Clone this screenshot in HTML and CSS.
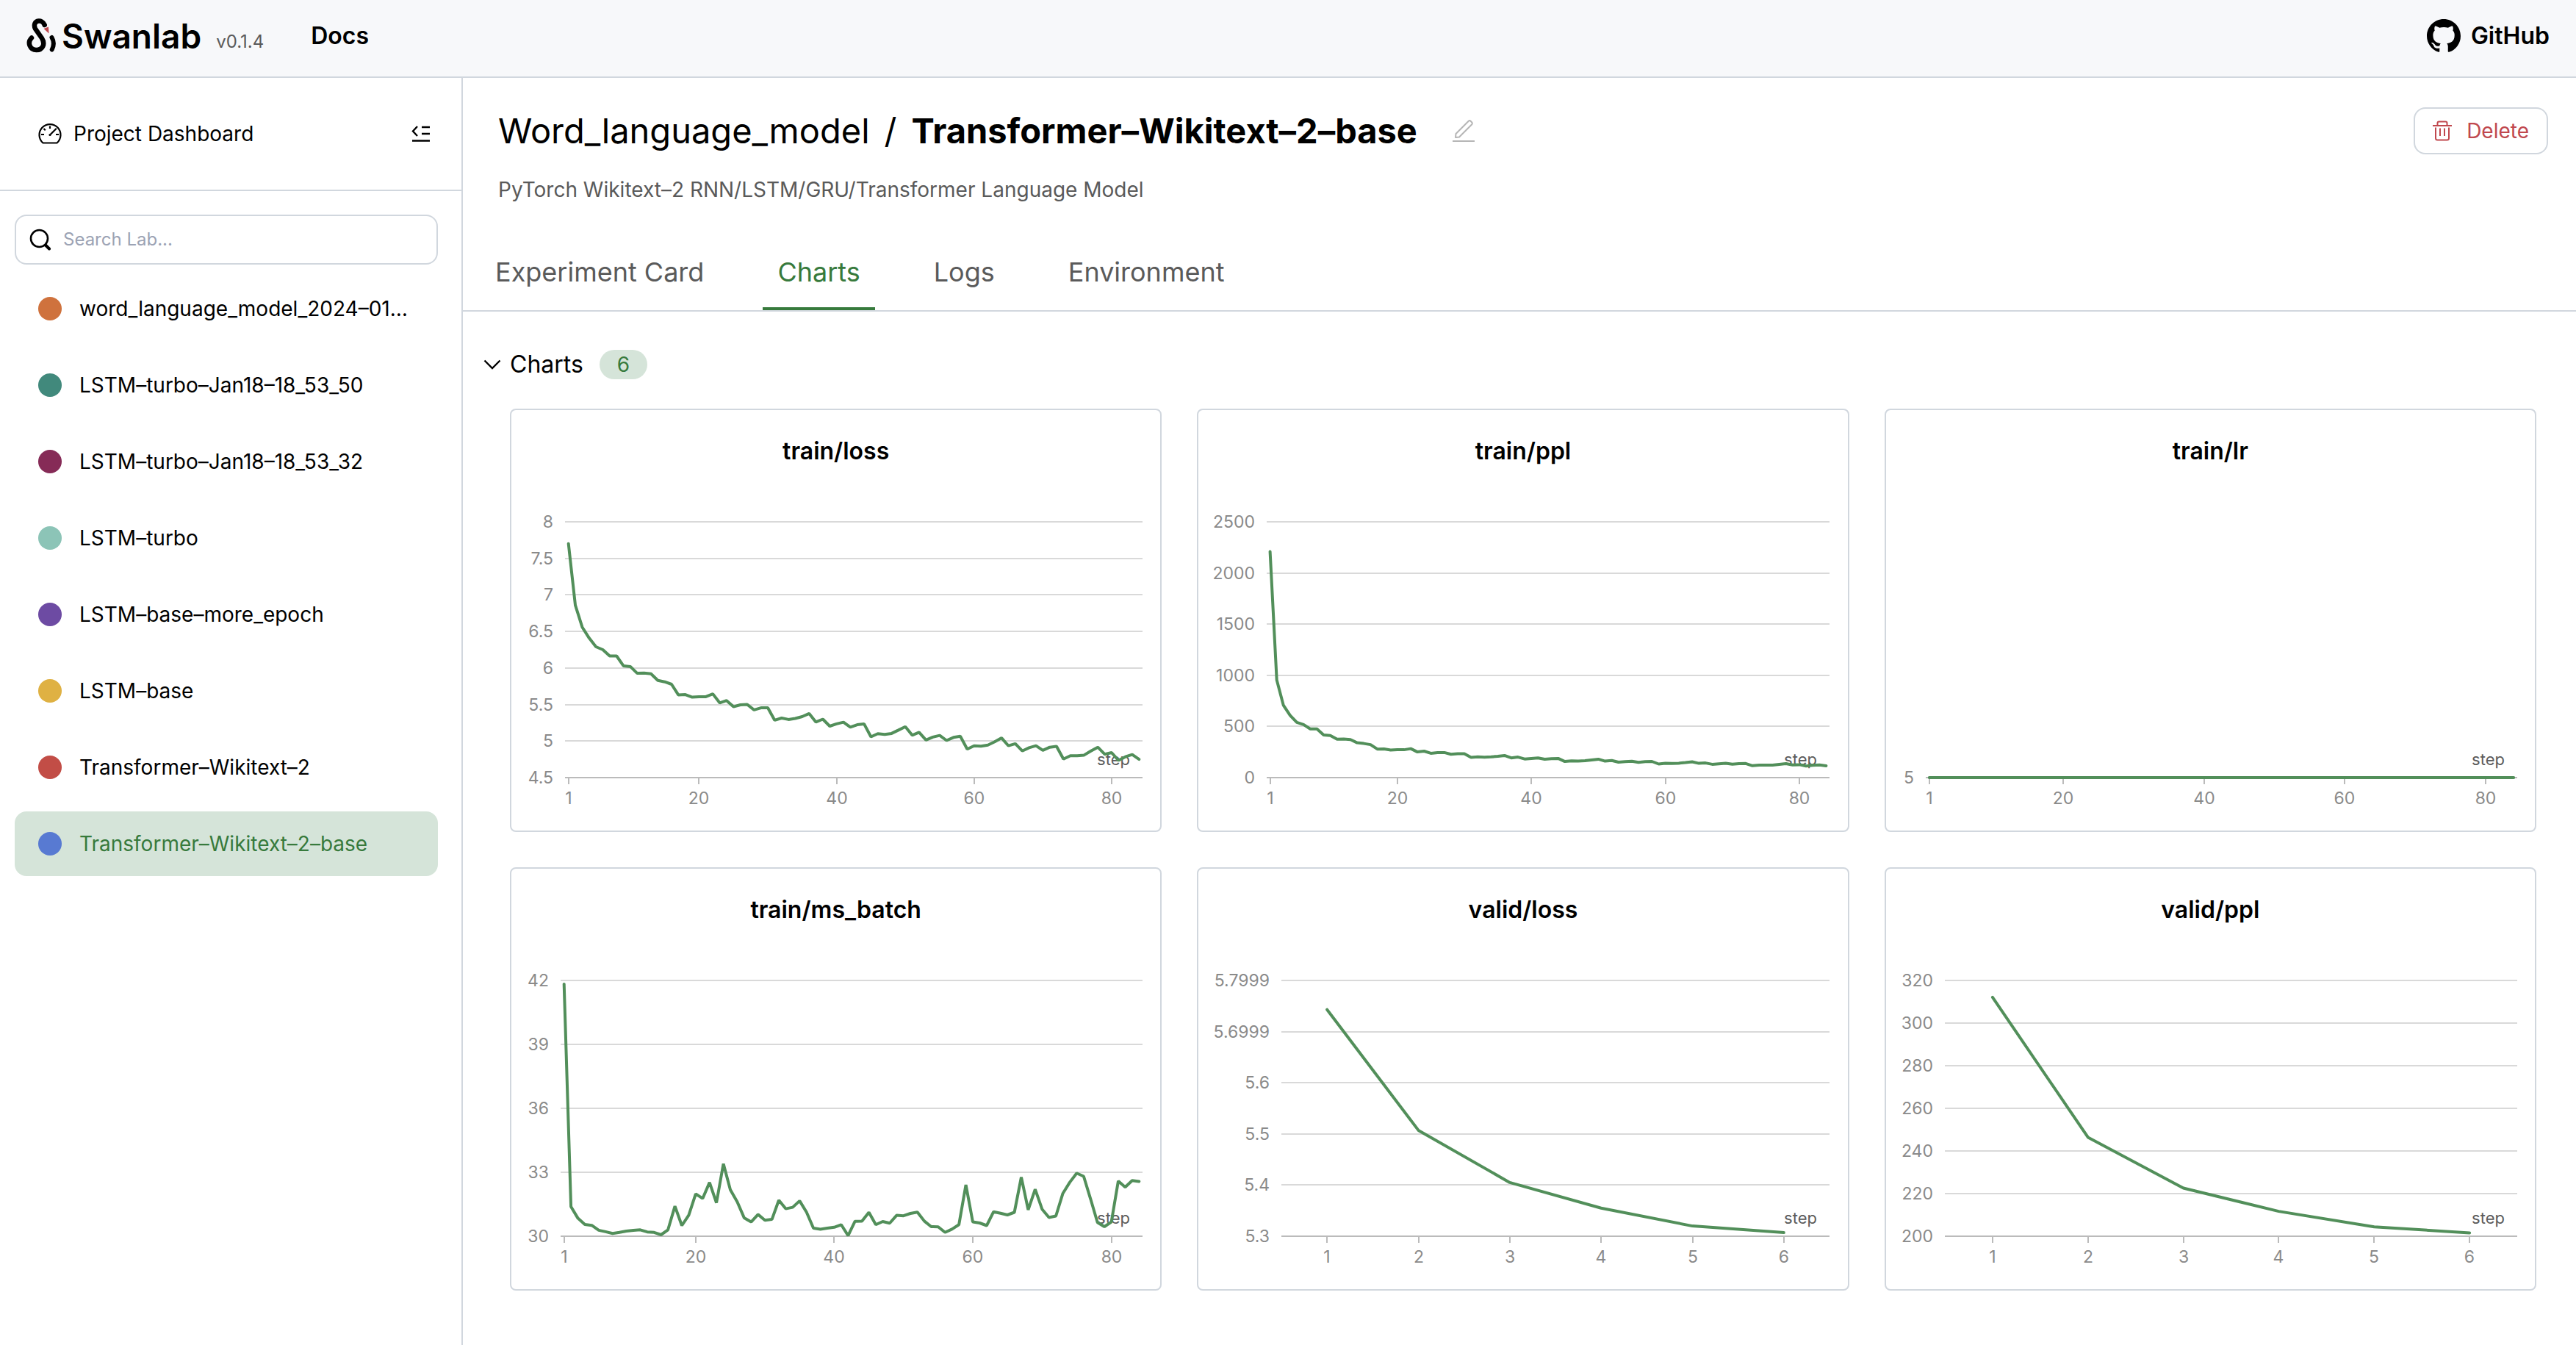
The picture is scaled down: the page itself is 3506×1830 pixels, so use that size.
FILE: index.html
```html
<!DOCTYPE html>
<html lang="en">
<head>
  <meta charset="utf-8">
  <title>Transformer-Wikitext-2-base - Swanlab</title>
  <meta name="viewport" content="width=device-width, initial-scale=1">
  <link rel="stylesheet" href="styles.css">
</head>
<body>
  <header class="topbar">
    <a class="brand" href="#">
      <svg class="brand-logo" viewBox="0 0 40 48" aria-hidden="true">
        <path d="M24.700 9C23 4.500 19 3.300 16.500 3.600C11.500 4.200 9.500 9 12 14L21 27C26 35 22 43 13.500 43C5 43 0.500 33 7 26.500" fill="none" stroke="#000" stroke-width="6.500" stroke-linecap="round"/>
        <path d="M34.500 26C37.500 31 37.500 37 34.700 42.500" fill="none" stroke="#000" stroke-width="6" stroke-linecap="round"/>
        <path d="M23.500 14L30 11.500L30.500 20.500Z" fill="#c0484e"/>
      </svg>
      <span class="brand-name">Swanlab</span>
    </a>
    <span class="version">v0.1.4</span>
    <a class="nav-link" href="#">Docs</a>
    <a class="nav-link github" href="#">
      <svg class="github-icon" viewBox="0 0 16 16" aria-hidden="true"><path d="M8 0C3.580 0 0 3.580 0 8c0 3.540 2.290 6.530 5.470 7.590.4.070.55-.17.55-.38 0-.19-.01-.82-.01-1.490-2.010.37-2.530-.49-2.690-.94-.09-.23-.48-.94-.82-1.130-.28-.15-.68-.52-.01-.53.63-.01 1.080.58 1.230.82.72 1.210 1.870.87 2.330.66.07-.52.28-.87.51-1.070-1.780-.2-3.640-.89-3.640-3.950 0-.87.31-1.590.82-2.150-.08-.2-.36-1.020.08-2.120 0 0 .67-.21 2.200.82.64-.18 1.320-.27 2-.27s1.360.09 2 .27c1.530-1.040 2.200-.82 2.200-.82.44 1.100.16 1.920.08 2.120.51.56.82 1.270.82 2.150 0 3.070-1.870 3.750-3.650 3.950.29.25.54.73.54 1.480 0 1.070-.01 1.930-.01 2.200 0 .21.15.46.55.38A8.010 8.010 0 0 0 16 8c0-4.420-3.580-8-8-8Z"/></svg>
      GitHub
    </a>
  </header>

  <div class="layout">
    <aside class="sidebar">
      <div class="dashboard-row">
        <a class="dashboard-link" href="#">
          <svg class="gauge-icon" viewBox="0 0 32 30" fill="none" stroke="#000" stroke-width="2.200" aria-hidden="true">
            <path d="M6.500 27.500A14.500 14.500 0 1 1 25.500 27.500Z" stroke-linejoin="round"/>
            <path d="M16 4.500v3.500M7.500 8l2.300 2.300M4 16h4M24 16h4M24.800 7.700l-8 8"/>
            <circle cx="16" cy="16.500" r="1.600" fill="#000" stroke="none"/>
          </svg>
          Project Dashboard
        </a>
        <button class="icon-button" type="button" aria-label="Collapse sidebar">
          <svg class="collapse-icon" viewBox="0 0 26 22" fill="none" stroke="#000" stroke-width="2.400" aria-hidden="true"><path d="M8 1L2 7.500L8 14M14 2h11M14 11h11M1 20.500h24"/></svg>
        </button>
      </div>
      <label class="search">
        <svg class="search-icon" viewBox="0 0 30 30" fill="none" stroke="#000" aria-hidden="true"><circle cx="13.500" cy="13.500" r="11.500" stroke-width="2.600"/><path d="M22 22.500L27 27.500" stroke-width="4" stroke-linecap="round"/></svg>
        <input class="search-input" type="search" placeholder="Search Lab..." aria-label="Search Lab">
      </label>
      <nav class="experiments" aria-label="Experiments">
        <a class="experiment" href="#"><span class="dot dot-orange"></span><span class="experiment-name">word_language_model_2024–01…</span></a>
        <a class="experiment" href="#"><span class="dot dot-green"></span><span class="experiment-name">LSTM–turbo–Jan18–18_53_50</span></a>
        <a class="experiment" href="#"><span class="dot dot-plum"></span><span class="experiment-name">LSTM–turbo–Jan18–18_53_32</span></a>
        <a class="experiment" href="#"><span class="dot dot-mint"></span><span class="experiment-name">LSTM–turbo</span></a>
        <a class="experiment" href="#"><span class="dot dot-violet"></span><span class="experiment-name">LSTM–base–more_epoch</span></a>
        <a class="experiment" href="#"><span class="dot dot-yellow"></span><span class="experiment-name">LSTM–base</span></a>
        <a class="experiment" href="#"><span class="dot dot-red"></span><span class="experiment-name">Transformer–Wikitext–2</span></a>
        <a class="experiment is-active" href="#" aria-current="page"><span class="dot dot-blue"></span><span class="experiment-name">Transformer–Wikitext–2–base</span></a>
      </nav>
    </aside>

    <main class="content">
      <div class="heading">
        <h1 class="title"><span>Word_language_model</span><span>/</span><strong class="title-run">Transformer–Wikitext–2–base</strong></h1>
        <button class="icon-button edit-button" type="button" aria-label="Edit experiment">
          <svg class="edit-icon" viewBox="0 0 30 32" fill="none" stroke="#b5b5b5" stroke-width="2" aria-hidden="true"><path d="M0 30h30"/><path d="M4 25L4.500 20L22 2.500Q23.200 1.500 24.300 2.500L26.500 4.800Q27.300 6 26.500 7L9 24.500Z" stroke-linejoin="round"/></svg>
        </button>
        <button class="delete-button" type="button">
          <svg class="trash-icon" viewBox="0 0 26 28" fill="none" stroke="currentColor" stroke-width="2" aria-hidden="true"><path d="M0 7h26M6.500 6V3.500Q6.500 1.500 8.500 1.500H17.500Q19.500 1.500 19.500 3.500V6M4 9.500V24Q4 26.500 6.500 26.500H19.500Q22 26.500 22 24V9.500M10 10.500V21M16 10.500V21"/></svg>
          Delete
        </button>
      </div>
      <p class="description">PyTorch Wikitext–2 RNN/LSTM/GRU/Transformer Language Model</p>
      <nav class="tabs" aria-label="Experiment sections">
        <a class="tab" href="#">Experiment Card</a>
        <a class="tab is-active" href="#" aria-current="page">Charts</a>
        <a class="tab" href="#">Logs</a>
        <a class="tab" href="#">Environment</a>
      </nav>

      <section class="chart-section">
        <button class="section-toggle" type="button" aria-expanded="true">
          <svg class="chevron" viewBox="0 0 24 14" fill="none" stroke="#000" stroke-width="2.400" aria-hidden="true"><path d="M1.500 1.500L12 12L22.500 1.500"/></svg>
          <span>Charts</span>
          <span class="count">6</span>
        </button>
        <div class="chart-grid">
          <article class="card"><h2 class="card-title">train/loss</h2><svg class="chart" data-chart="trainLoss" role="img" aria-label="train/loss"></svg></article>
          <article class="card"><h2 class="card-title">train/ppl</h2><svg class="chart" data-chart="trainPpl" role="img" aria-label="train/ppl"></svg></article>
          <article class="card"><h2 class="card-title">train/lr</h2><svg class="chart" data-chart="trainLr" role="img" aria-label="train/lr"></svg></article>
          <article class="card"><h2 class="card-title">train/ms_batch</h2><svg class="chart" data-chart="msBatch" role="img" aria-label="train/ms_batch"></svg></article>
          <article class="card"><h2 class="card-title">valid/loss</h2><svg class="chart" data-chart="validLoss" role="img" aria-label="valid/loss"></svg></article>
          <article class="card"><h2 class="card-title">valid/ppl</h2><svg class="chart" data-chart="validPpl" role="img" aria-label="valid/ppl"></svg></article>
        </div>
      </section>
    </main>
  </div>
  <script src="charts.js"></script>
</body>
</html>
```
FILE: styles.css
```css
:root {
  --border: #d1d7de;
  --green: #377a3c;
  --green-soft: #d5e4d9;
  --red: #c0484e;
  --dimmed: #5a5a5a;
}

* {
  box-sizing: border-box;
}

body {
  margin: 0;
  min-height: 100vh;
  display: flex;
  flex-direction: column;
  background: #fff;
  color: #000;
  font-family: Inter, "Liberation Sans", sans-serif;
  font-size: 28px;
  line-height: 40px;
}

a {
  color: inherit;
  text-decoration: none;
}

button {
  padding: 0;
  border: 0;
  background: none;
  color: inherit;
  font: inherit;
  cursor: pointer;
}

svg {
  display: block;
  flex: none;
}

/* Top bar */
.topbar {
  display: flex;
  align-items: center;
  padding: 0 36px 6px;
  height: 106px;
  border-bottom: 2px solid var(--border);
  background: #f7f8fa;
}

.brand {
  display: flex;
  align-items: center;
  gap: 8px;
}

.brand-logo {
  width: 40px;
  height: 48px;
}

.brand-name {
  font-size: 46px;
  font-weight: 600;
}

.version {
  margin: 16px 64px 0 20px;
  color: var(--dimmed);
  font-size: 24px;
  line-height: 32px;
}

.nav-link {
  font-size: 32px;
  font-weight: 600;
}

.github {
  display: flex;
  align-items: center;
  gap: 14px;
  margin-left: auto;
}

.github-icon {
  width: 46px;
  height: 46px;
}

.layout {
  flex: 1;
  display: flex;
}

/* Sidebar */
.sidebar {
  flex: none;
  width: 630px;
  border-right: 2px solid var(--border);
}

.dashboard-row {
  display: flex;
  align-items: center;
  justify-content: space-between;
  height: 154px;
  padding: 0 42px 0 52px;
  border-bottom: 2px solid var(--border);
}

.dashboard-link {
  display: flex;
  align-items: center;
  gap: 16px;
}

.gauge-icon {
  width: 32px;
  height: 30px;
}

.collapse-icon {
  width: 26px;
  height: 22px;
}

.search {
  display: flex;
  align-items: center;
  gap: 16px;
  height: 68px;
  margin: 32px 32px 16px 20px;
  padding: 0 18px;
  border: 2px solid var(--border);
  border-radius: 16px;
}

.search-icon {
  width: 30px;
  height: 30px;
}

.search-input {
  flex: 1;
  min-width: 0;
  padding: 0;
  border: 0;
  outline: 0;
  background: none;
  font: inherit;
  font-size: 24px;
}

.search-input::placeholder {
  color: #9ca3b4;
  opacity: 1;
}

.experiments {
  display: flex;
  flex-direction: column;
  gap: 16px;
  margin: 0 32px 0 20px;
}

.experiment {
  display: flex;
  align-items: center;
  gap: 24px;
  height: 88px;
  padding: 0 32px;
  border-radius: 16px;
}

.experiment.is-active {
  background: var(--green-soft);
  color: var(--green);
}

.experiment-name {
  overflow: hidden;
  text-overflow: ellipsis;
  white-space: nowrap;
}

.dot {
  flex: none;
  width: 32px;
  height: 32px;
  border-radius: 50%;
}

.dot-orange { background: #cf723d; }
.dot-green { background: #41897c; }
.dot-plum { background: #862b57; }
.dot-mint { background: #8cc4b7; }
.dot-violet { background: #6d4ba3; }
.dot-yellow { background: #dfb143; }
.dot-red { background: #c24d46; }
.dot-blue { background: #587ad2; }

/* Experiment heading */
.content {
  flex: 1;
  min-width: 0;
}

.heading {
  display: flex;
  align-items: center;
  padding: 40px 38px 0 48px;
}

.title {
  display: flex;
  gap: 20px;
  margin: 0;
  font-size: 47px;
  font-weight: 400;
  line-height: 64px;
}

.title-run {
  font-weight: 700;
}

.edit-button {
  margin-left: 48px;
}

.edit-icon {
  width: 30px;
  height: 32px;
}

.delete-button {
  display: flex;
  align-items: center;
  gap: 20px;
  height: 64px;
  margin-left: auto;
  padding: 0 24px;
  border: 2px solid var(--border);
  border-radius: 16px;
  color: var(--red);
}

.trash-icon {
  width: 26px;
  height: 28px;
}

.description {
  margin: 28px 48px 0;
  color: var(--dimmed);
}

.tabs {
  display: flex;
  gap: 60px;
  margin-top: 60px;
  padding: 0 24px;
  border-bottom: 2px solid var(--border);
}

.tab {
  padding: 10px 20px 26px;
  border-bottom: 4px solid transparent;
  color: var(--dimmed);
  font-size: 36px;
  line-height: 44px;
}

.tab.is-active {
  border-bottom-color: var(--green);
  color: var(--green);
}

/* Charts */
.chart-section {
  padding: 52px 54px 74px 28px;
}

.section-toggle {
  display: flex;
  align-items: center;
  gap: 12px;
  font-size: 32px;
}

.chevron {
  width: 24px;
  height: 14px;
}

.count {
  margin-left: 10px;
  padding: 0 24px;
  border-radius: 20px;
  background: var(--green-soft);
  color: var(--green);
  font-size: 28px;
}

.chart-grid {
  display: grid;
  grid-template-columns: repeat(3, minmax(0, 1fr));
  gap: 48px;
  margin: 40px 0 0 36px;
}

.card {
  border: 2px solid var(--border);
  border-radius: 8px;
}

.card-title {
  margin: 36px 0 0;
  font-size: 32px;
  font-weight: 600;
  line-height: 40px;
  text-align: center;
}

.chart {
  width: 100%;
  height: 496px;
}

.grid-line {
  stroke: #d9d9d9;
  stroke-width: 2;
}

.axis-line {
  stroke: #bbb;
  stroke-width: 2;
}

.series {
  fill: none;
  stroke: #528f5a;
  stroke-width: 4;
  stroke-linejoin: bevel;
  stroke-linecap: round;
}

.axis-label {
  fill: #8a8a8a;
  font-size: 23px;
}

.axis-name {
  fill: #5c5c5c;
  font-size: 22px;
}
```
FILE: charts.js
```js
const trainLoss = [
  7.70, 6.86, 6.56, 6.41, 6.29, 6.25, 6.165, 6.165, 6.03, 6.02, 5.927, 5.93, 5.92, 5.83, 5.81, 5.777,
  5.63, 5.635, 5.60, 5.607, 5.607, 5.646, 5.523, 5.554, 5.47, 5.496, 5.50, 5.427, 5.454, 5.454, 5.285,
  5.315, 5.296, 5.31, 5.335, 5.377, 5.26, 5.30, 5.204, 5.235, 5.258, 5.19, 5.223, 5.235, 5.058, 5.10,
  5.09, 5.104, 5.15, 5.196, 5.08, 5.12, 5.015, 5.054, 5.077, 5.008, 5.05, 5.065, 4.89, 4.935, 4.93,
  4.946, 4.99, 5.042, 4.935, 4.965, 4.865, 4.908, 4.935, 4.873, 4.915, 4.927, 4.754, 4.80, 4.80,
  4.808, 4.865, 4.915, 4.82, 4.842, 4.735, 4.785, 4.815, 4.75,
];

const msBatch = [
  41.83, 31.39, 30.84, 30.55, 30.51, 30.28, 30.21, 30.13, 30.18, 30.24, 30.28, 30.30, 30.20, 30.18,
  30.07, 30.30, 31.41, 30.50, 30.99, 31.99, 31.77, 32.52, 31.57, 33.40, 32.18, 31.61, 30.86, 30.67,
  31.02, 30.75, 30.79, 31.69, 31.29, 31.36, 31.66, 31.13, 30.38, 30.33, 30.38, 30.42, 30.54, 30.03,
  30.70, 30.71, 31.12, 30.54, 30.69, 30.61, 30.98, 30.96, 31.07, 31.13, 30.71, 30.45, 30.44, 30.18,
  30.33, 30.54, 32.41, 30.67, 30.62, 30.50, 31.15, 31.08, 31.00, 31.12, 32.77, 31.24, 32.20, 31.27,
  30.88, 30.95, 32.01, 32.53, 32.96, 32.81, 31.75, 30.65, 30.45, 30.67, 32.59, 32.30, 32.61, 32.57,
];

const longTicks = [1, 20, 40, 60, 80];
const shortTicks = [1, 2, 3, 4, 5, 6];

// left: room for the y labels; y: labels from the bottom line to the top one
const charts = {
  trainLoss: { left: 73, min: 4.5, max: 8, x: longTicks, y: ["4.5", "5", "5.5", "6", "6.5", "7", "7.5", "8"], data: trainLoss },
  trainPpl: { left: 93, min: 0, max: 2500, x: longTicks, y: ["0", "500", "1000", "1500", "2000", "2500"], data: trainLoss.map(Math.exp) },
  trainLr: { left: 54, min: 5, max: 6, x: longTicks, y: ["5"], data: trainLoss.map(() => 5) },
  msBatch: { left: 67, min: 30, max: 42, x: longTicks, y: ["30", "33", "36", "39", "42"], data: msBatch },
  validLoss: { left: 113, min: 5.3, max: 5.8, x: shortTicks, y: ["5.3", "5.4", "5.5", "5.6", "5.6999", "5.7999"], data: [5.743, 5.507, 5.405, 5.355, 5.32, 5.307] },
  validPpl: { left: 80, min: 200, max: 320, x: shortTicks, y: ["200", "220", "240", "260", "280", "300", "320"], data: [312.1, 246.4, 222.6, 211.7, 204.4, 201.6] },
};

const TOP = 76;
const BOTTOM = 424;
const RIGHT_MARGIN = 24;

function line(cls, x1, y1, x2, y2) {
  return `<line class="${cls}" x1="${x1}" y1="${y1}" x2="${x2}" y2="${y2}"/>`;
}

function text(cls, x, y, anchor, value) {
  return `<text class="${cls}" x="${x}" y="${y}" text-anchor="${anchor}">${value}</text>`;
}

function draw(svg) {
  const chart = charts[svg.dataset.chart];
  const left = chart.left;
  const right = Math.round(svg.clientWidth) - RIGHT_MARGIN;
  const xOf = (step) => left + ((step - 0.5) / chart.data.length) * (right - left);
  const yOf = (value) => BOTTOM - ((value - chart.min) / (chart.max - chart.min)) * (BOTTOM - TOP);
  const steps = Math.max(chart.y.length - 1, 1);
  let out = "";

  chart.y.forEach((label, i) => {
    const y = Math.round(BOTTOM - (i / steps) * (BOTTOM - TOP));
    out += line(i ? "grid-line" : "axis-line", left, y, right, y);
    out += text("axis-label", left - 16, y + 8, "end", label);
  });
  chart.x.forEach((step) => {
    const x = Math.round(xOf(step));
    out += line("axis-line", x, BOTTOM, x, BOTTOM + 9);
    out += text("axis-label", x, BOTTOM + 36, "middle", step);
  });
  out += text("axis-name", right - 17, BOTTOM - 17, "end", "step");

  const points = chart.data.map((v, i) => `${xOf(i + 1).toFixed(1)},${yOf(v).toFixed(1)}`);
  out += `<polyline class="series" points="${points.join(" ")}"/>`;
  svg.innerHTML = out;
}

function drawAll() {
  document.querySelectorAll(".chart").forEach(draw);
}

drawAll();
window.addEventListener("resize", drawAll);
```
